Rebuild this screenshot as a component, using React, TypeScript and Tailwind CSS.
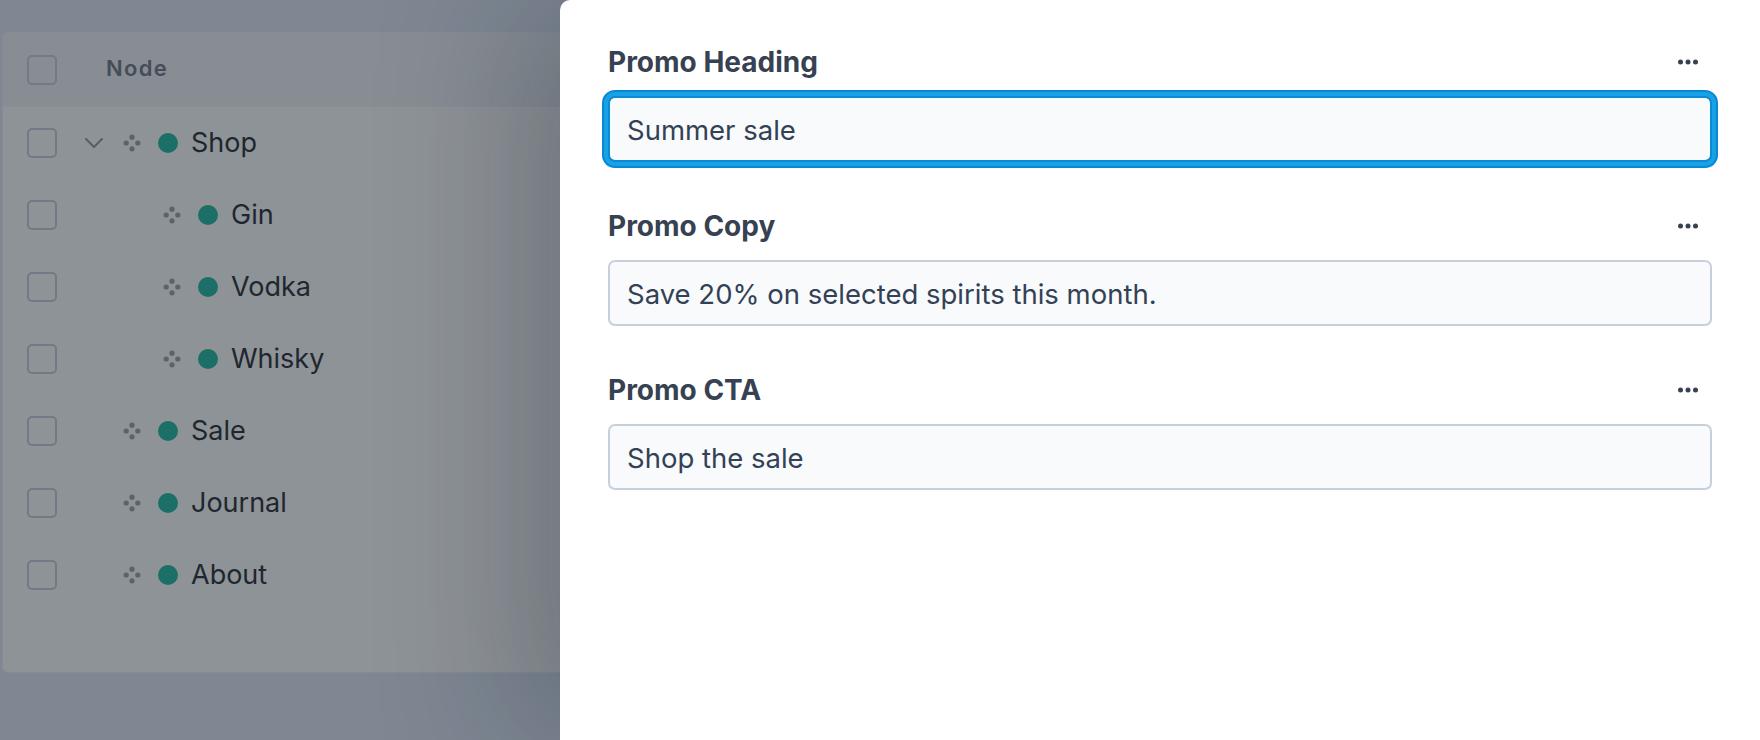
import React from "react";

interface TreeNode {
  label: string;
  depth: number;
  expanded?: boolean;
}

const nodes: TreeNode[] = [
  { label: "Shop", depth: 0, expanded: true },
  { label: "Gin", depth: 1 },
  { label: "Vodka", depth: 1 },
  { label: "Whisky", depth: 1 },
  { label: "Sale", depth: 0 },
  { label: "Journal", depth: 0 },
  { label: "About", depth: 0 },
];

const fields = [
  { label: "Promo Heading", value: "Summer sale", focused: true },
  { label: "Promo Copy", value: "Save 20% on selected spirits this month." },
  { label: "Promo CTA", value: "Shop the sale" },
];

const Checkbox = () => (
  <span className="block h-[30px] w-[30px] shrink-0 rounded-[5px] border-2 border-[#717a86]" />
);

const DragIcon = () => (
  <svg width="18" height="18" viewBox="0 0 18 18" className="shrink-0 text-[#5b626c]">
    <circle cx="9" cy="3.2" r="2.6" fill="currentColor" />
    <circle cx="3.2" cy="9" r="2.6" fill="currentColor" />
    <circle cx="14.8" cy="9" r="2.6" fill="currentColor" />
    <circle cx="9" cy="14.8" r="2.6" fill="currentColor" />
  </svg>
);

const Chevron = () => (
  <svg width="18" height="10" viewBox="0 0 18 10" className="text-[#575e68]">
    <path d="M1 1l8 8 8-8" fill="none" stroke="currentColor" strokeWidth="2" strokeLinecap="round" strokeLinejoin="round" />
  </svg>
);

const MoreIcon = () => (
  <svg width="20" height="6" viewBox="0 0 20 6" className="text-[#374151]">
    <circle cx="2.5" cy="3" r="2.5" fill="currentColor" />
    <circle cx="10" cy="3" r="2.5" fill="currentColor" />
    <circle cx="17.5" cy="3" r="2.5" fill="currentColor" />
  </svg>
);

const TreeRow = ({ node }: { node: TreeNode }) => (
  <div className="flex h-[72px] items-center pl-[24px]">
    <Checkbox />
    <div className={`ml-[28px] flex items-center ${node.depth === 1 ? "pl-10" : ""}`}>
      <span className="flex w-[38px] items-center">{node.expanded && <Chevron />}</span>
      <DragIcon />
      <span className="ml-[17px] h-[20px] w-[20px] rounded-full bg-[#1b6f67]" />
      <span className="ml-[13px] pb-[2px] text-[27px] leading-none text-[#1f2630]">{node.label}</span>
    </div>
  </div>
);

export default function App() {
  return (
    <div className="relative h-[740px] w-[1760px] overflow-hidden bg-[#7e8792] font-['Inter',sans-serif]">
      <div className="pl-[2px] pt-8">
        <div className="h-[641px] w-[1740px] overflow-hidden rounded-[6px] border border-[#848b93] bg-[#8e9397]">
          <div className="flex h-[74px] items-center bg-[#878d93] pl-[24px]">
            <Checkbox />
            <span className="ml-[49px] pb-1 text-[22px] font-semibold tracking-[0.06em] text-[#454d58]">Node</span>
          </div>
          {nodes.map((n) => (
            <TreeRow key={n.label} node={n} />
          ))}
        </div>
      </div>

      <aside className="absolute right-0 top-0 h-full w-[1200px] rounded-tl-[10px] bg-white px-12 pt-[46px] shadow-[-40px_0_140px_rgba(15,23,42,0.25)]">
        <div className="flex flex-col gap-12">
          {fields.map((f) => (
            <div key={f.label} className="flex flex-col">
              <div className="flex h-8 items-center justify-between">
                <span className="text-[28px] font-bold leading-8 text-[#364152]">{f.label}</span>
                <span className="mr-[14px] flex items-center">
                  <MoreIcon />
                </span>
              </div>
              <div
                className={`mt-[18px] flex h-[66px] items-center rounded-[7px] bg-[#f8fafc] pl-[17px] pt-1 text-[27.5px] text-[#334155] ${
                  f.focused
                    ? "border-2 border-[#0b8bd2] shadow-[0_0_0_4px_#17a1e7,0_0_0_6px_#0888d0]"
                    : "border-2 border-[#c6d0dc]"
                }`}
              >
                {f.value}
              </div>
            </div>
          ))}
        </div>
      </aside>
    </div>
  );
}
